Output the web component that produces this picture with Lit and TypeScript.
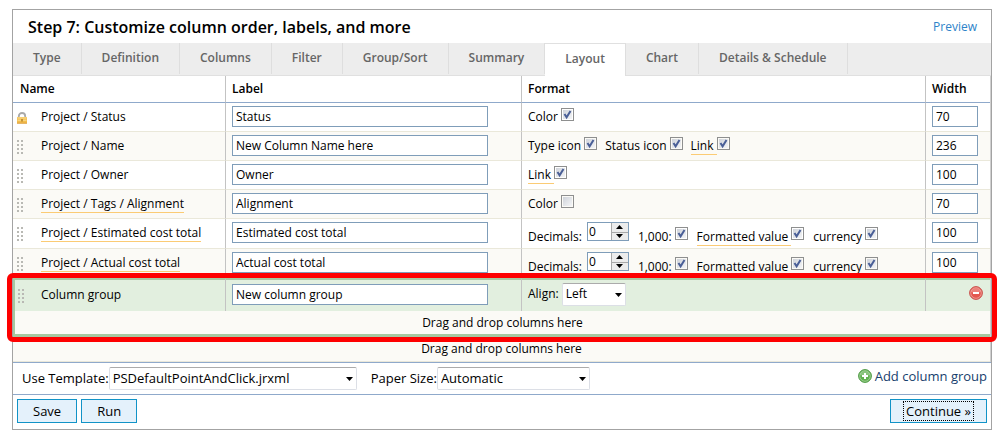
import { LitElement, html, css, nothing } from "lit";
import { customElement, property, state } from "lit/decorators.js";
import { classMap } from "lit/directives/class-map.js";

const TABS = ["Type", "Definition", "Columns", "Filter", "Group/Sort", "Summary", "Layout", "Chart", "Details & Schedule"];

type Option = { label: string; checked: boolean; hint?: boolean };
type Row = { name: string; label: string; width: string; locked?: boolean; hint?: boolean; decimals?: boolean; options: Option[] };

const money: Option[] = [
  { label: "1,000:", checked: true },
  { label: "Formatted value", checked: true, hint: true },
  { label: "currency", checked: true },
];

const ROWS: Row[] = [
  { name: "Project / Status", label: "Status", width: "70", locked: true, options: [{ label: "Color", checked: true }] },
  {
    name: "Project / Name", label: "New Column Name here", width: "236",
    options: [
      { label: "Type icon", checked: true },
      { label: "Status icon", checked: true },
      { label: "Link", checked: true, hint: true },
    ],
  },
  { name: "Project / Owner", label: "Owner", width: "100", options: [{ label: "Link", checked: true, hint: true }] },
  { name: "Project / Tags / Alignment", label: "Alignment", width: "70", hint: true, options: [{ label: "Color", checked: false }] },
  { name: "Project / Estimated cost total", label: "Estimated cost total", width: "100", hint: true, decimals: true, options: money },
  { name: "Project / Actual cost total", label: "Actual cost total", width: "100", hint: true, decimals: true, options: money },
];

const grip = html`<svg class="grip" width="8" height="16" viewBox="0 0 8 16" aria-hidden="true">
  <path fill="#b9b9b4" d="M1 1h2v2H1zM5 1h2v2H5zM1 5h2v2H1zM5 5h2v2H5zM1 9h2v2H1zM5 9h2v2H5zM1 13h2v2H1zM5 13h2v2H5z" />
</svg>`;

const lock = html`<svg class="lock" width="12" height="12" viewBox="0 0 12 12" aria-hidden="true">
  <path d="M2.800 6V4.200a3.200 3.200 0 0 1 6.400 0V6" fill="none" stroke="#a9a9a9" stroke-width="1.8" />
  <rect x="1" y="5" width="10" height="6.600" rx=".6" fill="#f3bd4c" />
  <path d="M1.500 6h9M1.500 8.200h9" stroke="#fbdf96" stroke-width="1" />
  <path d="M1 11.200h10" stroke="#d8973a" stroke-width=".8" />
  <path d="M6 7v2.600" stroke="#b5832a" stroke-width="1.600" />
</svg>`;

@customElement("spin-box")
export class SpinBox extends LitElement {
  @property({ type: Number }) value = 0;

  static styles = css`
    :host {
      display: inline-flex;
      box-sizing: border-box;
      width: 42px;
      height: 19px;
      border: 1px solid #7f9db9;
      background: #fff;
    }
    input {
      flex: 1;
      min-width: 0;
      padding: 0 1px;
      border: 0;
      outline: 0;
      background: none;
      font: 12px/16px "Open Sans", sans-serif;
      color: #000;
    }
    .steps {
      display: grid;
      grid-template-rows: 1fr 1fr;
      width: 17px;
    }
    button {
      display: grid;
      place-items: center;
      min-height: 0;
      padding: 0;
      border: 0;
      border-left: 1px solid #a8a8a8;
      background: #ececec;
    }
    button + button {
      border-top: 1px solid #a8a8a8;
    }
    svg {
      display: block;
    }
  `;

  render() {
    return html`
      <input aria-label="Decimals" inputmode="numeric" .value=${String(this.value)} />
      <span class="steps">
        <button aria-label="Increase" @click=${() => this.value++}>
          <svg width="7" height="4" viewBox="0 0 7 4"><path d="M0 4 3.500 0 7 4z" /></svg>
        </button>
        <button aria-label="Decrease" @click=${() => this.value--}>
          <svg width="7" height="4" viewBox="0 0 7 4"><path d="M0 0 3.500 4 7 0z" /></svg>
        </button>
      </span>
    `;
  }
}

@customElement("app-root")
export class AppRoot extends LitElement {
  @state() private tab = "Layout";

  static styles = css`
    :host {
      display: block;
      padding: 9px 10px 12px 12px;
      background: #fff;
      color: #000;
      font: 12px/16px "Open Sans", sans-serif;
    }
    * {
      box-sizing: border-box;
    }
    input,
    select,
    button {
      font: inherit;
      color: inherit;
    }
    .panel {
      border: 1px solid #a3a3a3;
    }
    .title {
      display: flex;
      align-items: center;
      justify-content: space-between;
      height: 33px;
      padding: 0 14px 0 15px;
    }
    h1 {
      margin: 0;
      font-size: 16px;
      line-height: 24px;
      font-weight: 600;
    }
    a {
      color: #2d83c9;
      text-decoration: none;
    }
    .tabs {
      display: flex;
      height: 33px;
      background: #ededed;
      border-bottom: 1px solid #e0e0e0;
    }
    .tab {
      height: 31px;
      padding: 0 20px 2px;
      border: 0;
      border-right: 1px solid #dedede;
      background: none;
      color: #666;
      font-weight: 600;
    }
    .tab.active {
      height: 33px;
      border-top: 1px solid #e0e0e0;
      background: #fff;
    }
    table {
      width: 100%;
      table-layout: fixed;
      border-collapse: separate;
      border-spacing: 0;
      border-right: 1px solid #d0d0d0;
    }
    .c-name {
      width: 212px;
    }
    .c-label {
      width: 296px;
    }
    .c-width {
      width: 65px;
    }
    th {
      height: 27px;
      padding: 0 6px;
      border-bottom: 1px solid #8fa9cb;
      text-align: left;
      font-weight: 600;
    }
    th:first-child {
      padding-left: 7px;
    }
    th + th,
    td + td {
      border-left: 1px solid #c3c3c3;
    }
    td {
      height: 29px;
      padding: 0 6px 1px;
      border-bottom: 1px solid #eae8da;
    }
    tr.tall td {
      height: 30px;
      padding-bottom: 2px;
    }
    tr.tall:last-child td {
      height: 29px;
      border-bottom: 0;
    }
    .odd {
      background: #fbfaf6;
    }
    td:first-child {
      padding-left: 3px;
    }
    .name {
      display: grid;
      grid-template-columns: 25px auto;
      justify-content: start;
      align-items: start;
      height: 17px;
    }
    .name span {
      padding-top: 1px;
    }
    .grip {
      display: block;
      margin-top: 2px;
    }
    .lock {
      display: block;
      margin-top: 4px;
    }
    .hint {
      border-bottom: 1px solid #fbcb74;
    }
    .text {
      display: block;
      width: 256px;
      height: 21px;
      padding: 0 3px;
      border: 1px solid #7f9db9;
      border-radius: 0;
      outline: 0;
      background: #fff;
    }
    .text.num {
      width: 46px;
    }
    .format {
      display: flex;
      align-items: center;
      gap: 8px;
    }
    .format label {
      display: flex;
      align-items: flex-start;
      height: 17px;
    }
    .caption {
      padding-right: 3px;
    }
    .format .caption {
      padding-top: 1px;
    }
    .tall .format {
      align-items: flex-start;
      gap: 9px;
      margin-top: 2px;
      height: 23px;
    }
    .tall .caption {
      margin-top: 6px;
    }
    .tall .check {
      margin-top: 5px;
    }
    .decimals {
      display: flex;
      align-items: flex-start;
      gap: 2px;
    }
    input[type="checkbox"] {
      appearance: none;
      width: 13px;
      height: 13px;
      margin: 0;
      border: 1px solid #8e8f8f;
      background: linear-gradient(135deg, #cfd3da, #f4f5f7) content-box #f4f4f4;
      padding: 1px;
    }
    .check {
      display: grid;
    }
    .check > * {
      grid-area: 1 / 1;
    }
    .check svg {
      pointer-events: none;
      visibility: hidden;
    }
    .check input:checked + svg {
      visibility: visible;
    }
    .group {
      position: relative;
    }
    .group td {
      border-bottom: 0;
    }
    .group .head td {
      height: 33px;
      padding-bottom: 2px;
      border-top: 2px solid #a6c8a1;
      background: #e2efdf;
    }
    .group td:first-child {
      border-left: 2px solid #a6c8a1;
      padding-left: 2px;
    }
    .group .name {
      grid-template-columns: 24px auto;
    }
    .group .drop td {
      height: 26px;
      padding: 0;
      border-bottom: 3px solid #a6c8a1;
    }
    .drop td {
      height: 25px;
      padding: 0;
      background: #fbfaf6;
      text-align: center;
    }
    .highlight {
      position: absolute;
      inset: -5px -7px -5px -6px;
      border: 5px solid #fe0000;
      border-radius: 6px;
      pointer-events: none;
    }
    .icon-button {
      display: block;
      margin: 0 1px 3px auto;
      padding: 0;
      border: 0;
      background: none;
    }
    .icon-button svg,
    .add svg {
      display: block;
    }
    .select {
      display: grid;
      align-items: center;
    }
    .select > * {
      grid-area: 1 / 1;
    }
    .select svg {
      justify-self: end;
      margin-right: 4px;
      pointer-events: none;
    }
    select {
      appearance: none;
      width: 100%;
      height: 23px;
      padding: 0 3px 2px;
      border: 1px solid #dcdfe6;
      border-top-color: #ababab;
      border-radius: 2px;
      background: #fff;
    }
    .align {
      width: 64px;
    }
    .template {
      width: 248px;
    }
    .paper {
      width: 153px;
    }
    .field {
      display: flex;
      align-items: center;
    }
    .head .caption {
      padding-bottom: 2px;
    }
    .options {
      display: flex;
      align-items: center;
      gap: 14px;
      height: 33px;
      padding: 0 4px 0 9px;
      border: solid #8fa9cb;
      border-width: 1px 0;
      font-size: 13px;
    }
    .options .caption {
      padding: 0 0 2px;
    }
    .add {
      display: flex;
      align-items: center;
      gap: 3px;
      margin-left: auto;
      padding: 0 0 6px;
      border: 0;
      background: none;
      color: #17406d;
    }
    .actions {
      display: flex;
      gap: 4px;
      padding: 4px 4px 6px;
      font-size: 13px;
    }
    .action {
      height: 24px;
      padding: 0 15px;
      border: 1px solid #1193c7;
      background: #e4f1fb;
    }
    .action.next {
      margin-left: auto;
      padding: 0 12px;
    }
    .next span {
      display: block;
      padding: 0 2px;
      border: 1px dotted #000;
      line-height: 18px;
    }
  `;

  private orb(kind: "add" | "remove") {
    const add = kind === "add";
    return html`<svg width="14" height="14" viewBox="0 0 14 14" aria-hidden="true">
      <circle cx="7" cy="7" r="6.400" fill=${add ? "#62b150" : "#e4574f"} stroke=${add ? "#4f9a45" : "#c8544f"} />
      <circle cx="7" cy="7" r="5.300" fill="none" stroke="#fff" stroke-width=".8" opacity=".45" />
      <path d="M2 6a5.200 5.200 0 0 1 10 0q-5 2-10 0z" fill="#fff" opacity=".25" />
      <path d=${add ? "M7 4v6M4 7h6" : "M4 7h6"} stroke="#fff" stroke-width="2" />
    </svg>`;
  }

  private select(cls: string, label: string, value: string) {
    return html`<label class="field">
      <span class="caption">${label}</span>
      <span class="select ${cls}">
        <select><option>${value}</option></select>
        <svg width="7" height="4" viewBox="0 0 7 4"><path d="M0 0h7L3.500 4z" /></svg>
      </span>
    </label>`;
  }

  private option(o: Option) {
    return html`<label>
      <span class=${classMap({ caption: true, hint: !!o.hint })}>${o.label}</span>
      <span class="check">
        <input type="checkbox" .checked=${o.checked} />
        <svg width="13" height="13" viewBox="0 0 13 13"><path d="M3.500 6 5.600 9.300 9.500 3" fill="none" stroke="#4a5f97" stroke-width="2" /></svg>
      </span>
    </label>`;
  }

  private row(r: Row, i: number) {
    return html`<tr class=${classMap({ odd: i % 2 === 1, tall: !!r.decimals })}>
      <td>
        <div class="name">${r.locked ? lock : grip}<span class=${classMap({ hint: !!r.hint })}>${r.name}</span></div>
      </td>
      <td><input class="text" aria-label="Label" .value=${r.label} /></td>
      <td>
        <div class="format">
          ${r.decimals ? html`<div class="decimals"><span class="caption">Decimals:</span><spin-box></spin-box></div>` : nothing}
          ${r.options.map((o) => this.option(o))}
        </div>
      </td>
      <td><input class="text num" aria-label="Width" .value=${r.width} /></td>
    </tr>`;
  }

  render() {
    return html`<main class="panel">
      <header class="title">
        <h1>Step 7: Customize column order, labels, and more</h1>
        <a href="#preview">Preview</a>
      </header>
      <nav class="tabs">
        ${TABS.map(
          (t) => html`<button class=${classMap({ tab: true, active: t === this.tab })} @click=${() => (this.tab = t)}>${t}</button>`
        )}
      </nav>
      <table>
        <colgroup>
          <col class="c-name" />
          <col class="c-label" />
          <col />
          <col class="c-width" />
        </colgroup>
        <thead>
          <tr><th>Name</th><th>Label</th><th>Format</th><th>Width</th></tr>
        </thead>
        <tbody>
          ${ROWS.map((r, i) => this.row(r, i))}
        </tbody>
        <tbody class="group">
          <tr class="head">
            <td><div class="name">${grip}<span>Column group</span></div></td>
            <td><input class="text" aria-label="Label" .value=${"New column group"} /></td>
            <td>${this.select("align", "Align:", "Left")}</td>
            <td><button class="icon-button" aria-label="Remove group">${this.orb("remove")}</button></td>
          </tr>
          <tr class="drop"><td colspan="4">Drag and drop columns here<div class="highlight"></div></td></tr>
        </tbody>
        <tbody>
          <tr class="drop"><td colspan="4">Drag and drop columns here</td></tr>
        </tbody>
      </table>
      <div class="options">
        ${this.select("template", "Use Template:", "PSDefaultPointAndClick.jrxml")}
        ${this.select("paper", "Paper Size:", "Automatic")}
        <button class="add">${this.orb("add")}<span>Add column group</span></button>
      </div>
      <footer class="actions">
        <button class="action">Save</button>
        <button class="action">Run</button>
        <button class="action next"><span>Continue »</span></button>
      </footer>
    </main>`;
  }
}
